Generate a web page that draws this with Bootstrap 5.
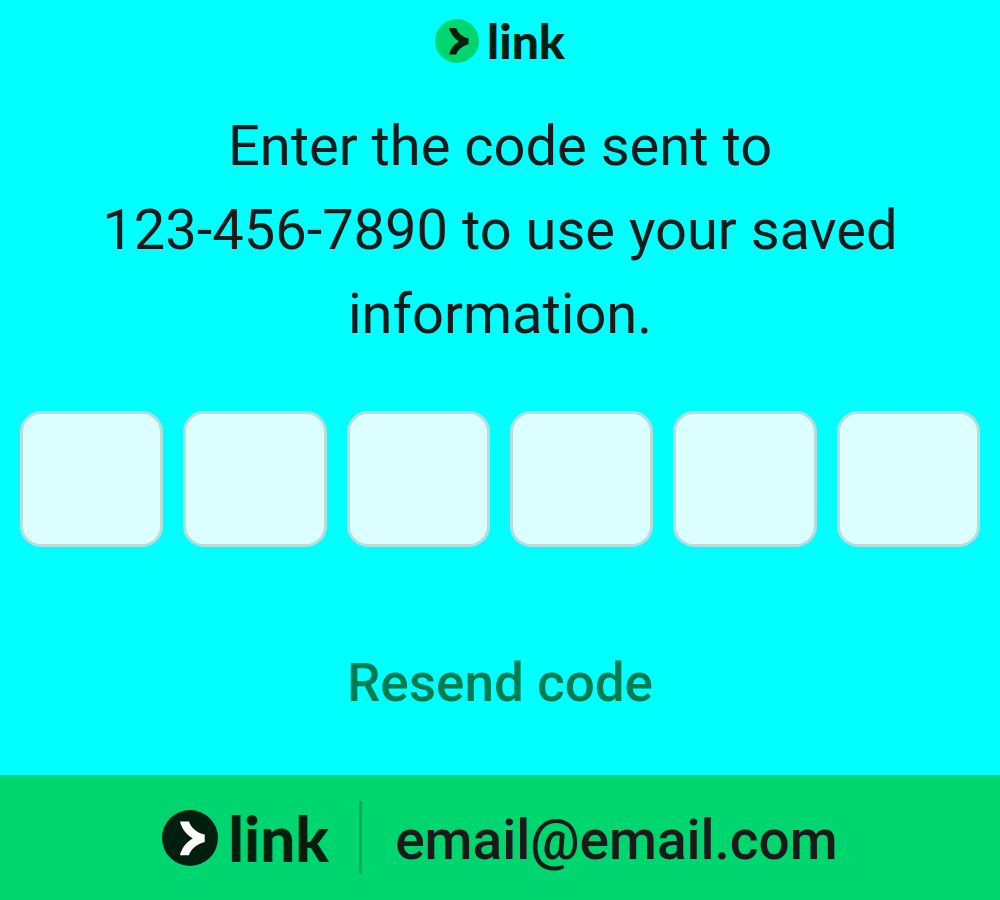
<!DOCTYPE html>
<html lang="en">
<head>
<meta charset="utf-8">
<meta name="viewport" content="width=device-width, initial-scale=1">
<title>Link verification</title>
<link href="https://cdn.jsdelivr.net/npm/bootstrap@5.3.0/dist/css/bootstrap.min.css" rel="stylesheet">
<style>
  body { background: #00ffff; color: #1a1a1a; font-family: Roboto, sans-serif; }
  .wordmark { color: #011e0f; font-family: Lato, sans-serif; font-weight: 900; font-size: 48px; line-height: 48px; }
  .wordmark-lg { font-size: 62px; line-height: 60px; }
  .brand-bar { padding-top: 17px; gap: 8px; }
  .prompt { font-size: 56px; line-height: 84px; font-weight: 400; max-width: 900px; margin-top: 39px; }
  .code-row { gap: 20px; padding: 0 20px; margin-top: 55px; }
  .code-box, .code-box:focus { min-width: 0; flex: 1 1 0; height: 136px; border: 3px solid #b8dcdc; border-radius: 21px; background: #dcffff; font-size: 56px; }
  .resend { color: #007c50; font-size: 53px; line-height: 80px; font-weight: 500; margin-top: 96px; }
  .account-bar { background: #00d66f; min-height: 125px; }
  .account-logo { gap: 10px; }
  .divider { width: 3px; height: 73px; background: #00ab59; margin: 0 33px 0 30px; }
  .email { font-size: 55px; line-height: 84px; font-weight: 500; padding-top: 4px; }
</style>
</head>
<body class="min-vh-100 d-flex flex-column">
<main class="text-center">
  <div class="brand-bar d-flex justify-content-center align-items-center">
    <svg width="44" height="44" viewBox="0 0 56 56" aria-hidden="true"><circle cx="28" cy="28" r="28" fill="#00d66f"/><path fill="#011e0f" d="M18 11.500H27C28.500 16.500 34 23 42.700 24.600V32C34 34 28.500 40 27 45.300H18C19.500 38.500 24 32 30.700 28.400C24 24.500 19.500 18 18 11.500Z"/></svg>
    <span class="wordmark">link</span>
  </div>
  <h1 class="prompt mx-auto mb-0">Enter the code sent to <br>123-456-7890 to use your saved information.</h1>
  <form>
    <div class="code-row d-flex">
      <input class="code-box form-control text-center" aria-label="Digit 1" inputmode="numeric" maxlength="1">
      <input class="code-box form-control text-center" aria-label="Digit 2" inputmode="numeric" maxlength="1">
      <input class="code-box form-control text-center" aria-label="Digit 3" inputmode="numeric" maxlength="1">
      <input class="code-box form-control text-center" aria-label="Digit 4" inputmode="numeric" maxlength="1">
      <input class="code-box form-control text-center" aria-label="Digit 5" inputmode="numeric" maxlength="1">
      <input class="code-box form-control text-center" aria-label="Digit 6" inputmode="numeric" maxlength="1">
    </div>
    <button type="button" class="resend btn p-0 border-0">Resend code</button>
  </form>
</main>
<footer class="account-bar mt-auto d-flex flex-wrap justify-content-center align-items-center">
  <div class="account-logo d-flex align-items-center">
    <svg width="56" height="56" viewBox="0 0 56 56" aria-hidden="true"><circle cx="28" cy="28" r="28" fill="#011e0f"/><path fill="#fff" d="M18 11.500H27C28.500 16.500 34 23 42.700 24.600V32C34 34 28.500 40 27 45.300H18C19.500 38.500 24 32 30.700 28.400C24 24.500 19.500 18 18 11.500Z"/></svg>
    <span class="wordmark wordmark-lg">link</span>
  </div>
  <div class="divider"></div>
  <span class="email">email@email.com</span>
</footer>
<script src="https://cdn.jsdelivr.net/npm/bootstrap@5.3.0/dist/js/bootstrap.bundle.min.js"></script>
</body>
</html>
